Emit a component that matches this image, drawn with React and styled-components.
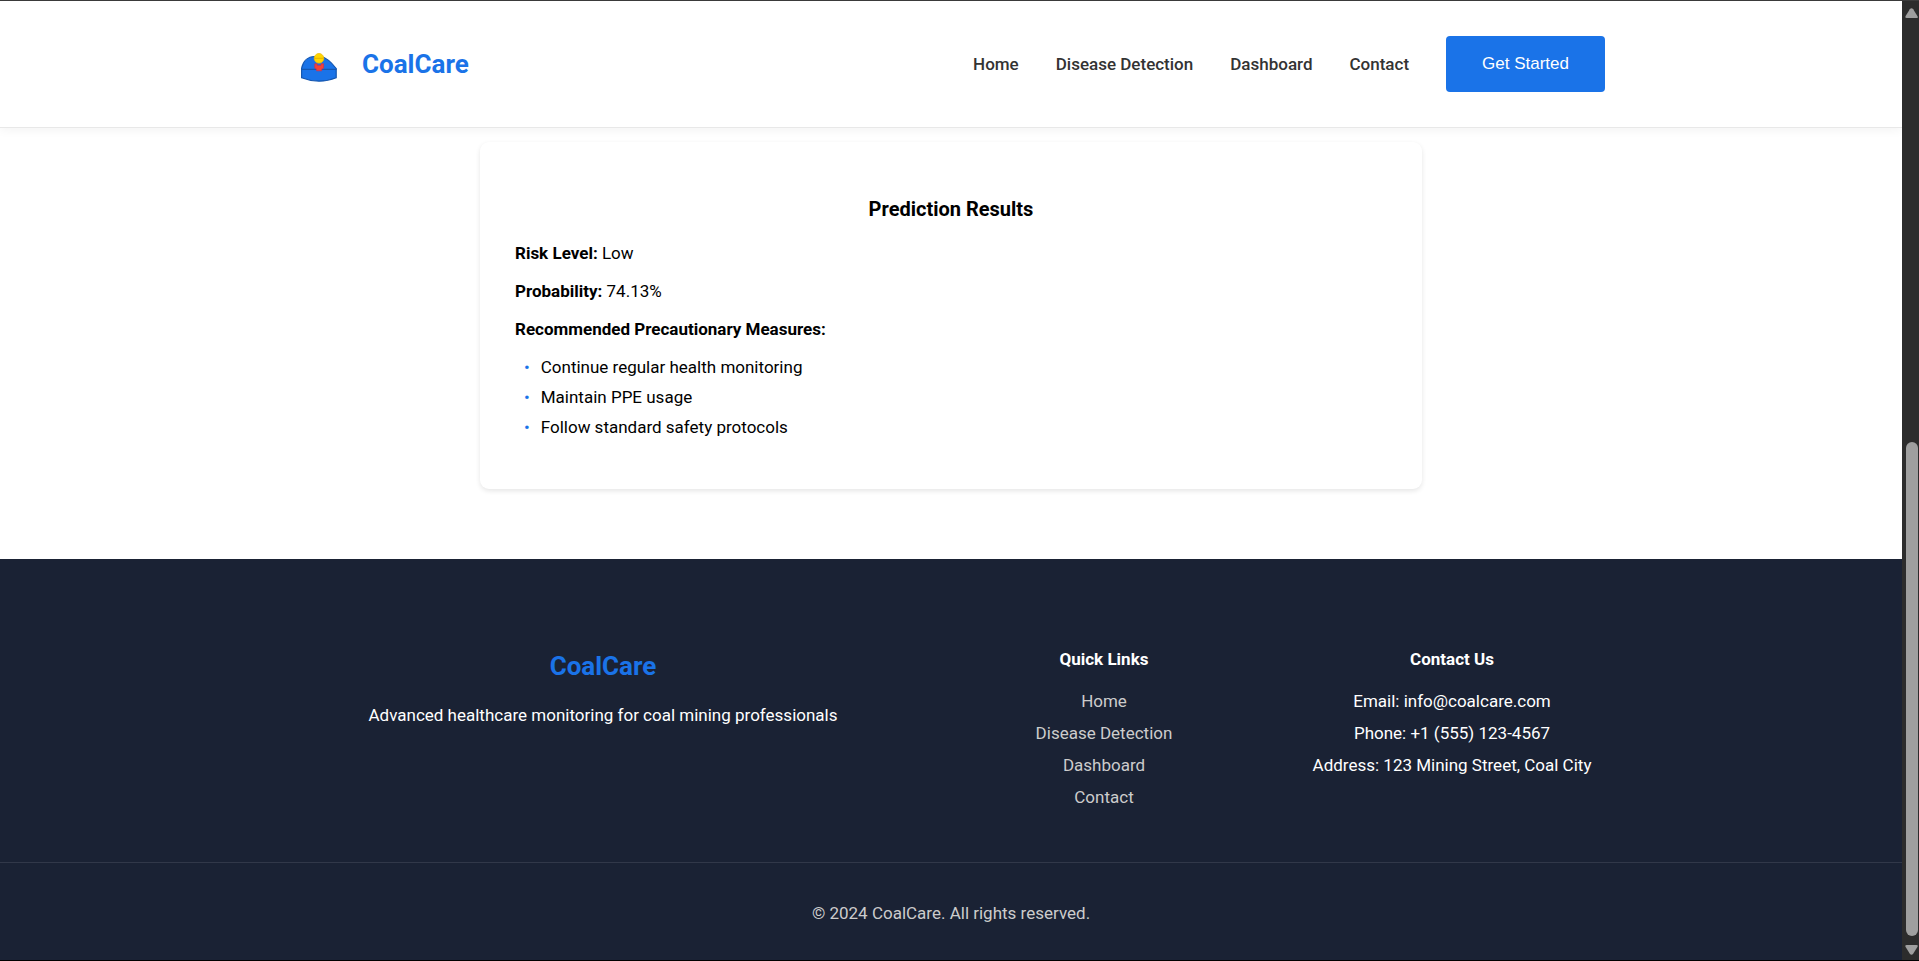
import React from "react";
import styled, { createGlobalStyle } from "styled-components";

const GlobalStyle = createGlobalStyle`
  *, *::before, *::after { box-sizing: border-box; }
  body {
    margin: 0;
    background: #fff;
    color: #000;
    font-family: Roboto, "Liberation Sans", sans-serif;
    font-size: 17px;
    line-height: 28px;
  }
  h2, h3, h4, p, ul { margin: 0; padding: 0; }
  ul { list-style: none; }
  a { text-decoration: none; color: inherit; }
`;

const Window = styled.div`
  display: flex;
  min-height: 100vh;
  border-top: 1px solid #3b3b3b;
  border-bottom: 1px solid #000;
`;

const Page = styled.div`
  flex: 1;
  min-width: 0;
  display: flex;
  flex-direction: column;
`;

const Container = styled.div`
  width: 100%;
  max-width: 1308px;
  margin: 0 auto;
`;

const Header = styled.header`
  padding: 35px 0;
  border-bottom: 1px solid #e8e8e8;
  background: #fff;
  box-shadow: 0 2px 10px rgba(0, 0, 0, 0.05);
`;

const HeaderRow = styled(Container)`
  display: flex;
  align-items: center;
  justify-content: space-between;
`;

const Logo = styled.a`
  display: flex;
  align-items: center;
  gap: 21px;
`;

const Brand = styled.h2`
  color: #1a73e8;
  font-size: 26px;
  font-weight: 700;
  line-height: 42px;
`;

const Nav = styled.nav`
  display: flex;
  align-items: center;
  gap: 37px;
`;

const NavLink = styled.a`
  color: #333;
  font-weight: 500;
`;

const Button = styled.button`
  height: 56px;
  padding: 0 36px;
  border: 0;
  border-radius: 4px;
  background: #1a73e8;
  color: #fff;
  font: 17px/20px "Liberation Sans", Arial, sans-serif;
  cursor: pointer;
`;

const Main = styled.main`
  flex: 1;
  padding: 14px 35px 69px;
`;

const Card = styled.section`
  max-width: 942px;
  margin: 0 auto;
  padding: 50px 35px 46px;
  border-radius: 9px;
  background: #fff;
  box-shadow: 0 2px 5px rgba(0, 0, 0, 0.1);
`;

const CardTitle = styled.h3`
  margin-bottom: 13px;
  font-size: 20px;
  font-weight: 700;
  line-height: 34px;
  text-align: center;
`;

const Fact = styled.p`
  margin-bottom: 10px;
`;

const Measures = styled.ul`
  padding-left: 9px;
`;

const Measure = styled.li`
  display: flex;
  gap: 11px;
  margin-bottom: 2px;

  &::before {
    content: "•";
    color: #1a73e8;
  }
`;

const Footer = styled.footer`
  background: #1a2234;
  color: #fff;
  text-align: center;
`;

const FooterColumns = styled(Container)`
  display: grid;
  grid-template-columns: 2fr 1fr 1fr;
  gap: 42px;
  padding: 86px 0 47px;
`;

const FooterBrand = styled(Brand)`
  margin-bottom: 14px;
`;

const FooterTitle = styled.h4`
  margin-bottom: 14px;
  font-size: 17px;
  font-weight: 700;
`;

const FooterItem = styled.li`
  margin-bottom: 4px;
`;

const FooterLink = styled.a`
  color: #ccc;
`;

const Copyright = styled.p`
  padding: 36px 0 33px;
  border-top: 1px solid #313849;
  color: #ccc;
`;

const Scrollbar = styled.div`
  flex: none;
  width: 17px;
  display: flex;
  flex-direction: column;
  align-items: center;
  padding: 6px 0 4px 2px;
  background: #2c2c2c;
`;

const Track = styled.div`
  flex: 1;
  width: 12px;
  display: flex;
  flex-direction: column;
  padding-bottom: 8px;
`;

const ThumbSpace = styled.div`
  flex: 424 0 0;
`;

const Thumb = styled.div`
  flex: 495 0 0;
  border-radius: 6px;
  background: #9f9f9f;
`;

const ArrowIcon = styled.svg`
  flex: none;
  display: block;
`;

const Arrow = ({ down }) => (
  <ArrowIcon width="15" height="12" viewBox="0 0 15 12" aria-hidden="true">
    <path
      d={
        down
          ? "M2.500 1h10q2 0 1 1.800L9.200 9.800q-1.700 2-3.400 0L1.500 2.800Q.6 1 2.500 1z"
          : "M2.500 11h10q2 0 1-1.800L9.200 2.200q-1.700-2-3.400 0L1.500 9.200Q.6 11 2.500 11z"
      }
      fill="#9f9f9f"
    />
  </ArrowIcon>
);

const HelmetIcon = () => (
  <svg width="44" height="44" viewBox="0 0 44 44" aria-hidden="true">
    <path
      d="M4.600 26.500C6 19 11 14.500 17.500 14.500H24C29.500 15.500 34.500 20.500 39.200 26.500V35.800Q31 39.200 22 39.200T4.600 35.800z"
      fill="#1a73e8"
      stroke="#1557b0"
      strokeWidth="1.200"
    />
    <path d="M4.500 27.300h35" stroke="#1557b0" strokeWidth="1.300" />
    <path
      d="M17.800 21.800h2.400v1.600h3.800v-1.600h2.600v4.400l-2 .8v1.800h-5v-1.800l-1.800-.8z"
      fill="#f44336"
      stroke="#d32f4f"
      strokeWidth=".7"
    />
    <circle cx="22" cy="16.300" r="4.800" fill="#ffd600" stroke="#edbc0a" strokeWidth=".8" />
    <path d="M17.500 16.300h9" stroke="#e0a800" strokeWidth=".8" />
  </svg>
);

const links = ["Home", "Disease Detection", "Dashboard", "Contact"];
const measures = [
  "Continue regular health monitoring",
  "Maintain PPE usage",
  "Follow standard safety protocols",
];
const contacts = [
  "Email: info@coalcare.com",
  "Phone: +1 (555) 123-4567",
  "Address: 123 Mining Street, Coal City",
];

export default function App() {
  return (
    <Window>
      <GlobalStyle />
      <Page>
        <Header>
          <HeaderRow>
            <Logo href="#">
              <HelmetIcon />
              <Brand>CoalCare</Brand>
            </Logo>
            <Nav>
              {links.map((label) => (
                <NavLink key={label} href="#">{label}</NavLink>
              ))}
              <Button type="button">Get Started</Button>
            </Nav>
          </HeaderRow>
        </Header>
        <Main>
          <Card>
            <CardTitle>Prediction Results</CardTitle>
            <Fact><strong>Risk Level:</strong> Low</Fact>
            <Fact><strong>Probability:</strong> 74.13%</Fact>
            <Fact><strong>Recommended Precautionary Measures:</strong></Fact>
            <Measures>
              {measures.map((text) => (
                <Measure key={text}>{text}</Measure>
              ))}
            </Measures>
          </Card>
        </Main>
        <Footer>
          <FooterColumns>
            <div>
              <FooterBrand>CoalCare</FooterBrand>
              <p>Advanced healthcare monitoring for coal mining professionals</p>
            </div>
            <div>
              <FooterTitle>Quick Links</FooterTitle>
              <ul>
                {links.map((label) => (
                  <FooterItem key={label}><FooterLink href="#">{label}</FooterLink></FooterItem>
                ))}
              </ul>
            </div>
            <div>
              <FooterTitle>Contact Us</FooterTitle>
              <ul>
                {contacts.map((text) => (
                  <FooterItem key={text}>{text}</FooterItem>
                ))}
              </ul>
            </div>
          </FooterColumns>
          <Copyright>© 2024 CoalCare. All rights reserved.</Copyright>
        </Footer>
      </Page>
      <Scrollbar aria-hidden="true">
        <Arrow />
        <Track>
          <ThumbSpace />
          <Thumb />
        </Track>
        <Arrow down />
      </Scrollbar>
    </Window>
  );
}
